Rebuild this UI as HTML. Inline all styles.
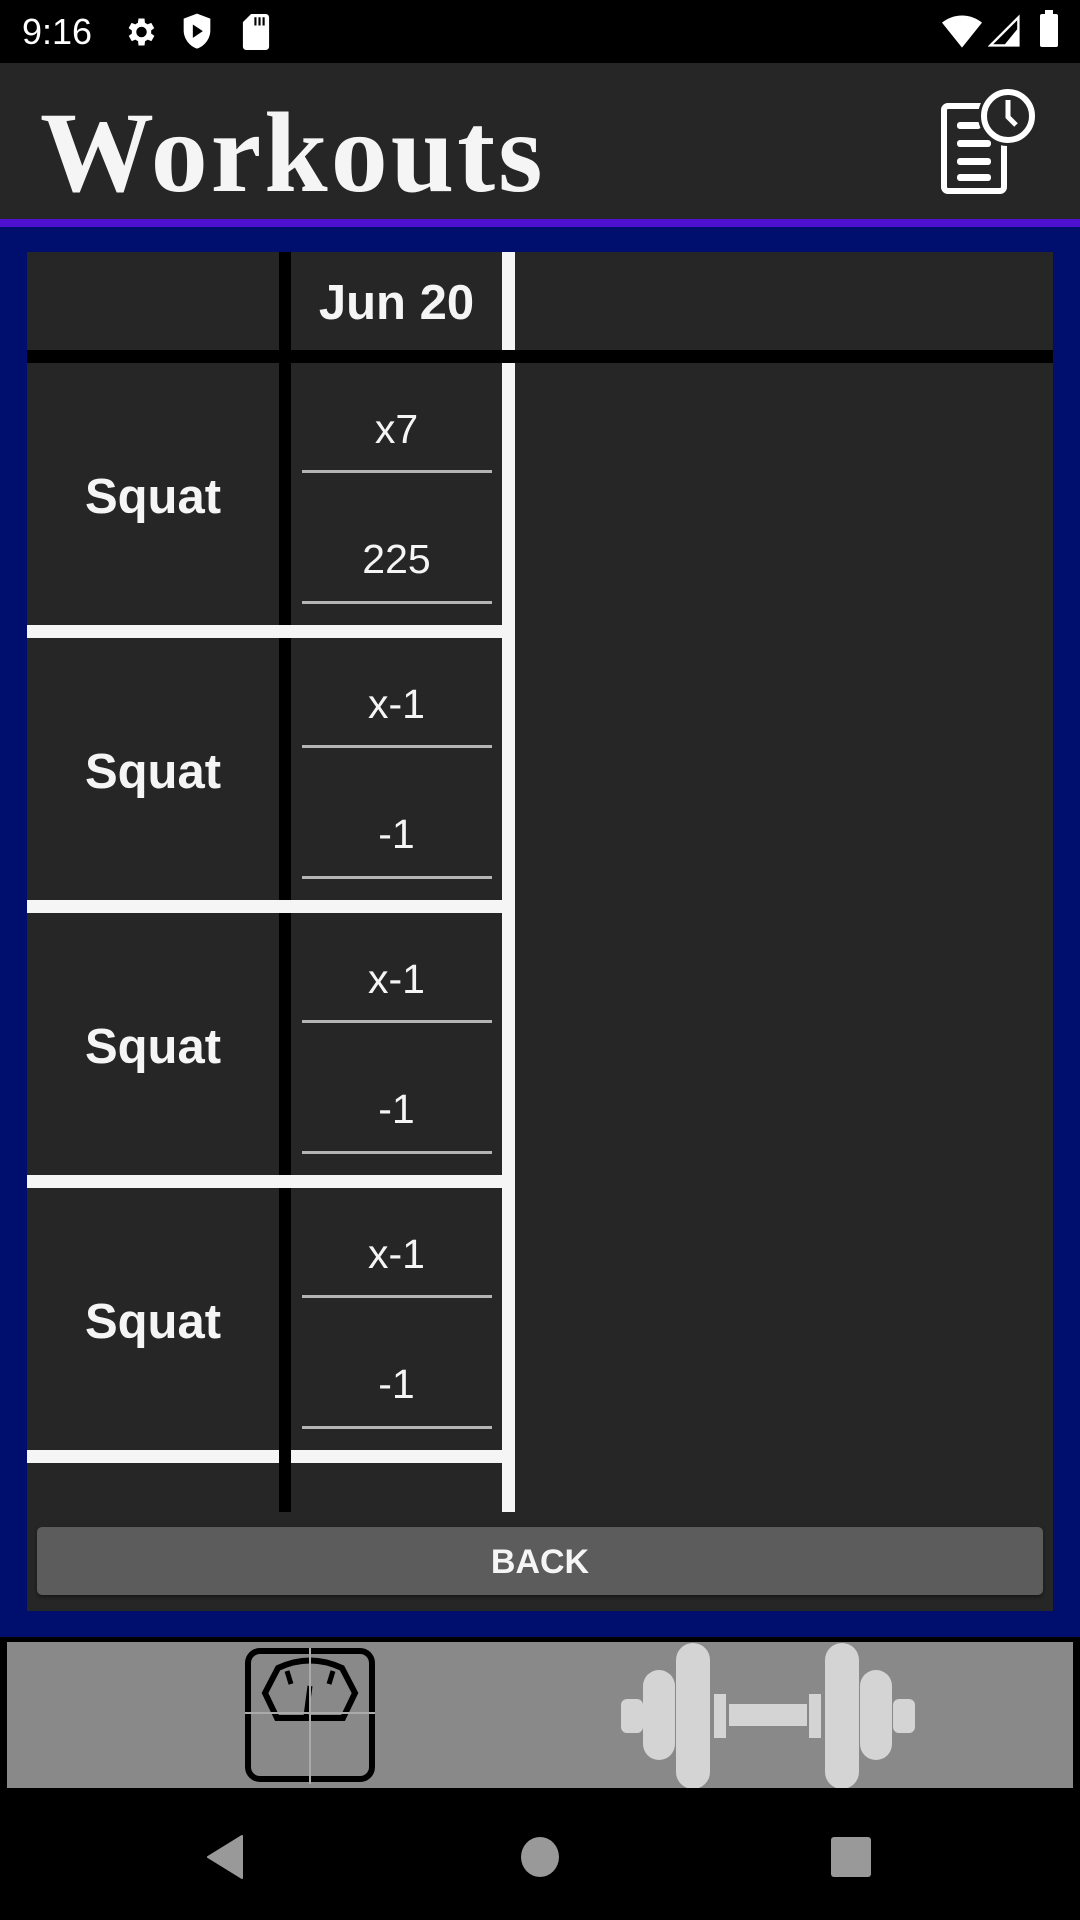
<!DOCTYPE html>
<html><head><meta charset="utf-8"><style>
*{margin:0;padding:0;box-sizing:border-box}
body{width:1080px;height:1920px;background:#000;position:relative;overflow:hidden;font-family:"Liberation Sans",sans-serif;color:#f5f5f5}
.a{position:absolute}
.sq{position:absolute;left:27px;width:252px;text-align:center;font-weight:bold;font-size:49px;line-height:56px}
.v{position:absolute;left:291px;width:211px;text-align:center;font-size:41px;line-height:50px}
.ul{position:absolute;left:302px;width:190px;height:3px;background:#b4b4b4}
.wl{position:absolute;left:27px;width:475px;height:13px;background:#f5f5f5}
</style></head><body>
<!-- status bar -->
<div class="a" style="left:22px;top:10px;font-size:36px;line-height:44px;color:#fff">9:16</div>
<svg class="a" style="left:120px;top:14px" width="40" height="36" viewBox="0 0 24 24"><path fill="#fff" d="M19.4 13a7.5 7.5 0 000-2l2.1-1.6-2-3.5-2.5 1a7 7 0 00-1.7-1L15 3h-4l-.4 2.9a7 7 0 00-1.7 1l-2.5-1-2 3.5L6.6 11a7.5 7.5 0 000 2l-2.1 1.6 2 3.5 2.5-1a7 7 0 001.7 1L11 21h4l.4-2.9a7 7 0 001.7-1l2.5 1 2-3.5zM13 15.5a3.5 3.5 0 110-7 3.5 3.5 0 010 7z"/></svg>
<svg class="a" style="left:180px;top:12px" width="34" height="40" viewBox="0 0 20 24"><path fill="#fff" d="M10 1L2 4v7c0 5 3.5 9.5 8 11 4.5-1.5 8-6 8-11V4z"/><path fill="#000" d="M7.5 7.5v8l6-4z"/></svg>
<svg class="a" style="left:242px;top:14px" width="28" height="36" viewBox="0 0 16 22"><path fill="#fff" d="M5 0h9a2 2 0 012 2v18a2 2 0 01-2 2H2a2 2 0 01-2-2V5z"/><path fill="#000" d="M7 2h1.3v5H7zM9.5 2h1.3v5H9.5zM12 2h1.3v5H12z"/></svg>
<svg class="a" style="left:942px;top:14px" width="40" height="34" viewBox="0 0 24 20"><path fill="#fff" d="M12 20L0 5a19 19 0 0124 0z"/></svg>
<svg class="a" style="left:988px;top:14px" width="32" height="34" viewBox="0 0 20 20"><path fill="none" stroke="#fff" stroke-width="1.5" d="M19 1.5V19H1.5z"/><path fill="#fff" d="M19 8v11H10z"/></svg>
<div class="a" style="left:1040px;top:14px;width:18px;height:33px;background:#fff;border-radius:2px"></div>
<div class="a" style="left:1045px;top:10px;width:8px;height:5px;background:#fff"></div>
<!-- app bar -->
<div class="a" style="left:0;top:63px;width:1080px;height:156px;background:#262626"></div>
<div class="a" style="left:40px;top:86px;font-family:'Liberation Serif',serif;font-weight:bold;font-size:114px;line-height:134px;color:#f5f5f5;letter-spacing:3px">Workouts</div>
<svg class="a" style="left:940px;top:86px" width="96" height="110" viewBox="0 0 96 110">
<rect x="4" y="20" width="60" height="85" rx="4" fill="none" stroke="#fff" stroke-width="6"/>
<rect x="17" y="36" width="24" height="7" rx="3" fill="#fff"/>
<rect x="17" y="54" width="34" height="7" rx="3" fill="#fff"/>
<rect x="17" y="72" width="34" height="7" rx="3" fill="#fff"/>
<rect x="17" y="88" width="34" height="7" rx="3" fill="#fff"/>
<circle cx="68" cy="30" r="30" fill="#262626"/>
<circle cx="68" cy="30" r="24" fill="none" stroke="#fff" stroke-width="6"/>
<path d="M68 14v17l8 8" fill="none" stroke="#fff" stroke-width="5"/>
</svg>
<div class="a" style="left:0;top:219px;width:1080px;height:8px;background:#5010d0"></div>
<!-- blue bg -->
<div class="a" style="left:0;top:227px;width:1080px;height:1410px;background:#000e6e"></div>
<div class="a" style="left:27px;top:252px;width:1026px;height:1359px;background:#262626"></div>
<!-- grid lines -->
<div class="a" style="left:279px;top:252px;width:12px;height:1260px;background:#000"></div>
<div class="a" style="left:502px;top:252px;width:13px;height:1260px;background:#f5f5f5"></div>
<div class="a" style="left:27px;top:350px;width:1026px;height:13px;background:#000"></div>
<div class="a" style="left:291px;top:273px;width:211px;text-align:center;font-weight:bold;font-size:49px;line-height:60px">Jun 20</div>
<!-- rows -->
<div class="sq" style="top:469px">Squat</div>
<div class="v" style="top:404px">x7</div><div class="ul" style="top:470px"></div>
<div class="v" style="top:534px">225</div><div class="ul" style="top:601px"></div>
<div class="wl" style="top:625px"></div>

<div class="sq" style="top:744px">Squat</div>
<div class="v" style="top:679px">x-1</div><div class="ul" style="top:745px"></div>
<div class="v" style="top:809px">-1</div><div class="ul" style="top:876px"></div>
<div class="wl" style="top:900px"></div>

<div class="sq" style="top:1019px">Squat</div>
<div class="v" style="top:954px">x-1</div><div class="ul" style="top:1020px"></div>
<div class="v" style="top:1084px">-1</div><div class="ul" style="top:1151px"></div>
<div class="wl" style="top:1175px"></div>

<div class="sq" style="top:1294px">Squat</div>
<div class="v" style="top:1229px">x-1</div><div class="ul" style="top:1295px"></div>
<div class="v" style="top:1359px">-1</div><div class="ul" style="top:1426px"></div>
<div class="wl" style="top:1450px"></div>
<div class="a" style="left:279px;top:1450px;width:12px;height:13px;background:#000"></div>
<!-- back -->
<div class="a" style="left:37px;top:1527px;width:1006px;height:68px;background:#5c5c5d;border-radius:5px;box-shadow:0 2px 3px rgba(0,0,0,.4);text-align:center;font-size:34px;line-height:70px;font-weight:bold">BACK</div>
<!-- bottom nav -->
<div class="a" style="left:7px;top:1642px;width:1066px;height:146px;background:#898989"></div>
<svg class="a" style="left:245px;top:1648px" width="130" height="136" viewBox="0 0 130 136">
<rect x="3" y="3" width="124" height="128" rx="12" fill="none" stroke="#000" stroke-width="6"/>
<path d="M20 45 L33 20 Q65 5 97 20 L110 45 L98 70 L32 70 Z" fill="none" stroke="#000" stroke-width="6"/>
<path d="M65 38 L61 68 M42 23 L46 36 M88 23 L84 36" stroke="#000" stroke-width="5"/>
<line x1="0" y1="65" x2="130" y2="65" stroke="#aaa" stroke-width="2"/>
<line x1="65" y1="0" x2="65" y2="136" stroke="#aaa" stroke-width="2"/>
</svg>
<svg class="a" style="left:621px;top:1642px" width="294" height="146" viewBox="0 0 294 146">
<rect x="0" y="57" width="22" height="34" rx="6" fill="#d4d4d4"/>
<rect x="22" y="28" width="32" height="90" rx="16" fill="#d4d4d4"/>
<rect x="55" y="1" width="34" height="146" rx="17" fill="#d4d4d4"/>
<rect x="93" y="52" width="12" height="44" fill="#d4d4d4"/>
<rect x="108" y="62" width="78" height="22" fill="#d4d4d4"/>
<rect x="188" y="52" width="12" height="44" fill="#d4d4d4"/>
<rect x="204" y="1" width="34" height="146" rx="17" fill="#d4d4d4"/>
<rect x="239" y="28" width="32" height="90" rx="16" fill="#d4d4d4"/>
<rect x="272" y="57" width="22" height="34" rx="6" fill="#d4d4d4"/>
</svg>
<!-- system nav -->
<svg class="a" style="left:206px;top:1835px" width="38" height="44" viewBox="0 0 38 44"><path d="M36 1V43L2 22Z" fill="#999" stroke="#999" stroke-width="2" stroke-linejoin="round"/></svg>
<div class="a" style="left:521px;top:1837px;width:38px;height:40px;border-radius:50%;background:#999"></div>
<div class="a" style="left:831px;top:1837px;width:40px;height:40px;border-radius:3px;background:#999"></div>
</body></html>
